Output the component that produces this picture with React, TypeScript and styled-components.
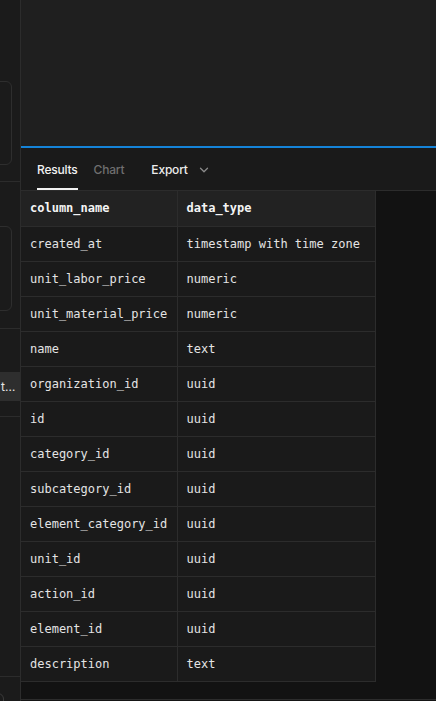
import React from "react";
import styled, { createGlobalStyle } from "styled-components";

type Row = {
  column: string;
  type: string;
};

const rows: Row[] = [
  { column: "created_at", type: "timestamp with time zone" },
  { column: "unit_labor_price", type: "numeric" },
  { column: "unit_material_price", type: "numeric" },
  { column: "name", type: "text" },
  { column: "organization_id", type: "uuid" },
  { column: "id", type: "uuid" },
  { column: "category_id", type: "uuid" },
  { column: "subcategory_id", type: "uuid" },
  { column: "element_category_id", type: "uuid" },
  { column: "unit_id", type: "uuid" },
  { column: "action_id", type: "uuid" },
  { column: "element_id", type: "uuid" },
  { column: "description", type: "text" },
];

const Global = createGlobalStyle`
  html, body {
    margin: 0;
    padding: 0;
    background: #121212;
    overflow: hidden;
  }
  * {
    box-sizing: border-box;
  }
`;

function App() {
  return (
    <>
      <Global />
      <Page>
        <Sidebar>
          <SideSection pt={81} pb={16}>
            <Card h={84} />
          </SideSection>
          <SideSection pt={44} pb={17}>
            <Card h={85} />
          </SideSection>
          <SideSection pt={43} pb={15}>
            <SideItem>t…</SideItem>
          </SideSection>
          <SideFill />
          <SideBottom>
            <Knob />
          </SideBottom>
        </Sidebar>
        <Main>
          <Editor />
          <TabBar>
            <Tab active>Results</Tab>
            <Tab>Chart</Tab>
            <ExportButton>
              Export
              <svg width="10" height="10" viewBox="0 0 10 10" fill="none">
                <path d="M1.5 3.2 L5 6.7 L8.5 3.2" stroke="#8a8a8a" strokeWidth="1.3" strokeLinecap="round" strokeLinejoin="round" />
              </svg>
            </ExportButton>
          </TabBar>
          <Results>
            <Grid>
              <thead>
                <tr>
                  <HeadCell w={156}>column_name</HeadCell>
                  <HeadCell w={198}>data_type</HeadCell>
                </tr>
              </thead>
              <tbody>
                {rows.map((row) => (
                  <tr key={row.column}>
                    <Cell>{row.column}</Cell>
                    <Cell>{row.type}</Cell>
                  </tr>
                ))}
              </tbody>
            </Grid>
          </Results>
          <StatusBar />
        </Main>
      </Page>
    </>
  );
}

const Page = styled.div`
  display: flex;
  width: 436px;
  height: 701px;
  overflow: hidden;
  background: #121212;
`;

const Sidebar = styled.div`
  width: 21px;
  flex-shrink: 0;
  display: flex;
  flex-direction: column;
  background: #1b1b1b;
  border-right: 1px solid #2c2c2c;
  overflow: hidden;
`;

const SideSection = styled.div<{ pt: number; pb: number }>`
  padding-top: ${({ pt }) => pt}px;
  padding-bottom: ${({ pb }) => pb}px;
  border-bottom: 1px solid #2c2c2c;
`;

const Card = styled.div<{ h: number }>`
  width: 100px;
  height: ${({ h }) => h}px;
  margin-left: -88px;
  border: 1px solid #2e2e2e;
  border-radius: 6px;
`;

const SideItem = styled.div`
  height: 29px;
  width: 20px;
  background: #2e2e2e;
  color: #e6e6e6;
  font-family: Inter, "Noto Sans", sans-serif;
  font-size: 12px;
  line-height: 29px;
  white-space: nowrap;
  overflow: hidden;
  padding-left: 1px;
`;

const SideFill = styled.div`
  flex: 1;
  border-bottom: 1px solid #2c2c2c;
`;

const SideBottom = styled.div`
  height: 24px;
  padding-top: 16px;
`;

const Knob = styled.div`
  width: 18px;
  height: 18px;
  margin-left: -14px;
  border: 1px solid #3a3a3a;
  border-radius: 6px;
`;

const Main = styled.div`
  flex: 1;
  display: flex;
  flex-direction: column;
  min-width: 0;
`;

const Editor = styled.div`
  height: 148px;
  flex-shrink: 0;
  background: #1f1f1f;
  border-bottom: 2px solid #1583d8;
`;

const TabBar = styled.div`
  height: 43px;
  flex-shrink: 0;
  display: flex;
  align-items: stretch;
  gap: 16px;
  padding-left: 16px;
  background: #1a1a1a;
  border-bottom: 1px solid #2c2c2c;
  font-family: Inter, "Noto Sans", sans-serif;
  font-size: 12px;
`;

const Tab = styled.div<{ active?: boolean }>`
  display: flex;
  align-items: center;
  padding-top: 3px;
  font-weight: 500;
  letter-spacing: -0.2px;
  color: ${({ active }) => (active ? "#f2f2f2" : "#6f6f6f")};
  border-bottom: 2px solid ${({ active }) => (active ? "#f2f2f2" : "transparent")};
`;

const ExportButton = styled.div`
  display: flex;
  align-items: center;
  gap: 11px;
  margin-left: 11px;
  padding-top: 1px;
  font-weight: 500;
  letter-spacing: -0.2px;
  color: #ededed;
`;

const Results = styled.div`
  flex: 1;
  background: #121212;
  overflow: hidden;
`;

const Grid = styled.table`
  border-collapse: collapse;
  font-family: "DejaVu Sans Mono", "Liberation Mono", monospace;
  font-size: 12px;
  color: #e4e4e4;
`;

const HeadCell = styled.th<{ w: number }>`
  width: ${({ w }) => w}px;
  height: 35px;
  padding: 0 9px;
  text-align: left;
  font-weight: 700;
  color: #f4f4f4;
  background: #222222;
  border: 1px solid #2c2c2c;
  border-top: none;
  &:first-child {
    border-left: none;
  }
`;

const Cell = styled.td`
  height: 35px;
  padding: 0 9px;
  background: #1a1a1a;
  border: 1px solid #2c2c2c;
  white-space: nowrap;
  &:first-child {
    border-left: none;
  }
`;

const StatusBar = styled.div`
  height: 2px;
  flex-shrink: 0;
  border-top: 1px solid #2c2c2c;
  background: #151515;
`;

export default App;
